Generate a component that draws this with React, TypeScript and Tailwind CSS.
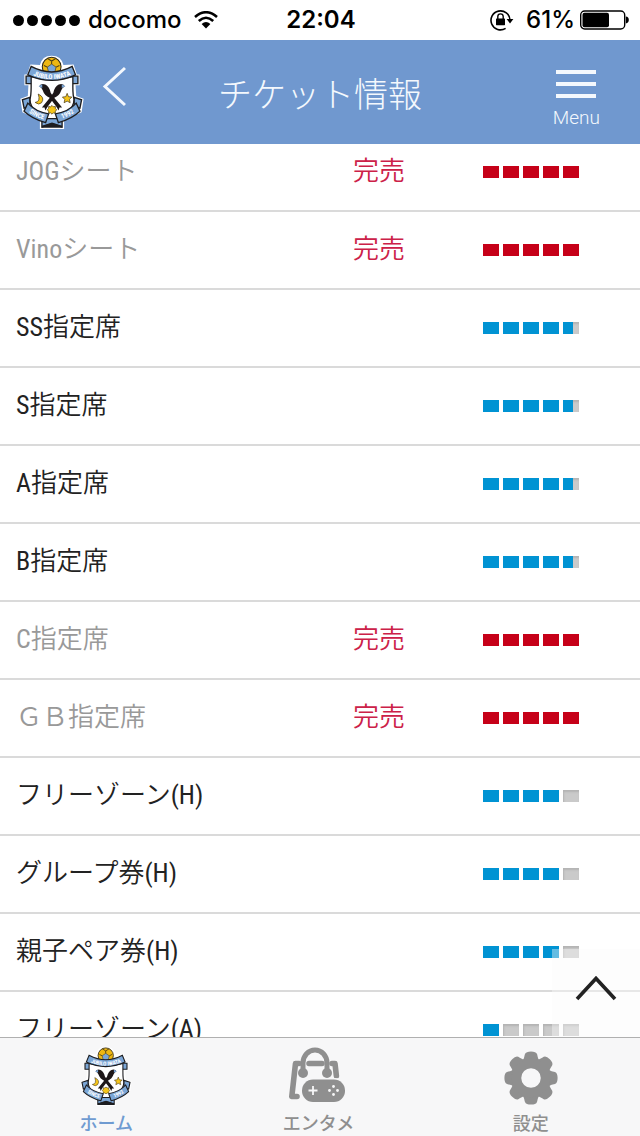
import { useId } from "react";

interface Seat {
  name: string;
  level: number;
  soldOut?: boolean;
}

const seats: Seat[] = [
  { name: "JOGシート", level: 5, soldOut: true },
  { name: "Vinoシート", level: 5, soldOut: true },
  { name: "SS指定席", level: 4.6 },
  { name: "S指定席", level: 4.6 },
  { name: "A指定席", level: 4.6 },
  { name: "B指定席", level: 4.6 },
  { name: "C指定席", level: 5, soldOut: true },
  { name: "ＧＢ指定席", level: 5, soldOut: true },
  { name: "フリーゾーン(H)", level: 4 },
  { name: "グループ券(H)", level: 4 },
  { name: "親子ペア券(H)", level: 4 },
  { name: "フリーゾーン(A)", level: 1 },
];

function Crest({ className }: { className: string }) {
  const id = useId();

  return (
    <svg viewBox="34 20 184 220" className={className} aria-hidden="true">
      {/* white outline */}
      <path
        d="M90 50Q96 22 125 22T160 50L190 48L200 78H208V110H196L198 142L220 150L214 190L162 214V240H90V214L38 190L32 150L54 142L56 110H44V78H52L62 48Z"
        fill="#fff"
      />
      {/* ball */}
      <circle cx="125" cy="55" r="28" fill="#eeb711" stroke="#2a2415" strokeWidth="3" />
      <path d="M125 47L138 56L134 72H116L112 56Z" fill="#7ba6d6" stroke="#4a3b12" strokeWidth="2" />
      <path d="M125 47V38M138 56L148 51M112 56L102 51M112 30L125 38L138 30" fill="none" stroke="#4a3b12" strokeWidth="3" />
      {/* side tabs */}
      <path d="M49 83H72V105H49ZM180 83H203V105H180Z" fill="#7ba6d6" stroke="#1d1d20" strokeWidth="4" />
      {/* shield */}
      <path
        d="M64 84Q126 100 188 84V116Q188 142 192 152Q188 196 126 214Q64 196 60 152Q64 142 64 116Z"
        fill="#fff"
        stroke="#1d1d20"
        strokeWidth="4"
      />
      {/* birds */}
      <g fill="#1d1718">
        <path d="M88 113Q94 103 106 108Q118 114 122 132L130 144L156 176L148 176L146 185L138 172L119 147Q104 142 98 124L95 119Z" />
        <path d="M164 113Q158 103 146 108Q134 114 130 132L122 144L96 176L104 176L106 185L114 172L133 147Q148 142 154 124L157 119Z" />
      </g>
      <path d="M86 113L97 107V118ZM166 113L155 107V118Z" fill="#7ba6d6" />
      {/* moon, sun, star */}
      <g fill="#f5c51a" stroke="#3a2c10" strokeWidth="2">
        <path d="M85 136Q106 146 95 162Q87 170 76 161Q93 159 85 136Z" />
        <path d="M171 134L175 144L185 145L178 152L180 162L171 157L162 162L164 152L157 145L167 144Z" />
        <path d="M126 170L130 174L136 173L136 179L140 183L136 187L136 193L130 192L126 196L122 192L116 193L116 187L112 183L116 179L116 173L122 174Z" />
      </g>
      {/* ribbons */}
      <g fill="#7ba6d6" stroke="#1d1d20" strokeWidth="4">
        <path d="M60 146L38 153L43 178L60 174ZM192 146L214 153L209 178L192 174Z" />
        <path d="M96 209H156V234L126 224L96 234Z" />
        <path d="M54 163Q76 188 116 195L107 221Q66 209 43 187Z" />
        <path d="M198 163Q176 188 136 195L145 221Q186 209 209 187Z" />
        <path d="M64 54Q125 87 186 54L196 79Q125 112 54 79Z" />
      </g>
      <path d="M96 230V236H156V230L126 221Z" fill="#1d1d20" />
      <path id={`${id}a`} d="M60 76Q125 108 192 75" fill="none" />
      <path id={`${id}b`} d="M49 183Q72 206 112 214" fill="none" />
      <path id={`${id}c`} d="M140 214Q180 205 205 181" fill="none" />
      <g fill="#fff" fontFamily="Liberation Sans Narrow, Roboto Condensed, sans-serif" fontWeight="700" fontSize="20">
        <text textAnchor="middle">
          <textPath href={`#${id}a`} startOffset="50%">JUBILO IWATA</textPath>
        </text>
        <text textAnchor="middle">
          <textPath href={`#${id}b`} startOffset="50%">SINCE</textPath>
        </text>
        <text textAnchor="middle">
          <textPath href={`#${id}c`} startOffset="50%">1992</textPath>
        </text>
      </g>
    </svg>
  );
}

function StatusBar() {
  return (
    <div className="grid h-10 shrink-0 grid-cols-[1fr_auto_1fr] items-center bg-white pl-[13px] pr-[11px] font-['Inter',sans-serif] text-2xl text-black">
      <div className="flex items-center">
        <div className="flex gap-[3px]">
          {[1, 2, 3, 4, 5].map((n) => (
            <span key={n} className="size-[11px] rounded-full bg-black" />
          ))}
        </div>
        <span className="ml-2 font-medium">docomo</span>
        <svg viewBox="0 0 24 18" className="ml-3 h-[18px] w-6" aria-hidden="true">
          <g fill="none" stroke="#000" strokeWidth="2.6">
            <path d="M1 6Q12 -3.5 23 6" />
            <path d="M4.8 10Q12 3.5 19.2 10" />
          </g>
          <path d="M7.6 13Q12 9 16.4 13L12 17.6Z" />
        </svg>
      </div>
      <span className="font-semibold">22:04</span>
      <div className="flex items-center justify-end">
        <svg viewBox="0 0 24 22" className="h-[22px] w-6" aria-hidden="true">
          <path d="M15.6 19.4A9.5 9.5 0 1 1 20 11" fill="none" stroke="#000" strokeWidth="1.6" />
          <path d="M16.6 10H23.4L20 14.4Z" />
          <rect x="6" y="9.6" width="9" height="6.6" rx="0.6" />
          <path d="M7.8 10V7.6A2.7 2.7 0 0 1 13.2 7.6V10" fill="none" stroke="#000" strokeWidth="1.4" />
        </svg>
        <span className="ml-3 mr-1 font-medium">61%</span>
        <svg viewBox="0 0 50 20" className="h-5 w-[50px]" aria-hidden="true">
          <rect x="1.7" y="1" width="44" height="18" rx="4" fill="none" stroke="#000" strokeWidth="1.4" />
          <rect x="3.5" y="2.8" width="26.5" height="14.4" rx="2" />
          <path d="M46.8 6.6Q49.8 7 49.8 10T46.8 13.4Z" />
        </svg>
      </div>
    </div>
  );
}

function Header() {
  return (
    <header className="grid h-[104px] shrink-0 grid-cols-[1fr_auto_1fr] items-center bg-[#7098cf] text-[#f4f8fd]">
      <div className="flex items-center pl-5">
        <Crest className="h-[74px] w-16" />
        <button aria-label="戻る" className="mb-3 ml-4">
          <svg viewBox="0 0 26 42" className="h-[42px] w-[26px]">
            <path d="M25 3L5 21.5L25 40" fill="none" stroke="currentColor" strokeWidth="3" />
          </svg>
        </button>
      </div>
      <h1 className="font-['Noto_Sans_CJK_JP',sans-serif] text-[34px] font-light">チケット情報</h1>
      <button className="mr-10 mt-4 flex flex-col items-center justify-self-end font-['Roboto',sans-serif] text-[19px] font-light leading-6">
        <span className="mb-2 flex w-10 flex-col gap-2">
          <span className="h-1 bg-[#f4f8fd]" />
          <span className="h-1 bg-[#f4f8fd]" />
          <span className="h-1 bg-[#f4f8fd]" />
        </span>
        Menu
      </button>
    </header>
  );
}

function Gauge({ level, soldOut }: { level: number; soldOut?: boolean }) {
  return (
    <div className="flex gap-1" role="meter" aria-label="残席" aria-valuemin={0} aria-valuemax={5} aria-valuenow={soldOut ? 0 : level}>
      {[0, 1, 2, 3, 4].map((i) => {
        const fill = Math.max(0, Math.min(1, level - i));
        return (
          <div key={i} className="h-3 w-4 bg-[#cacaca] shadow-[inset_1px_2px_2px_#b4b4b4]">
            <div
              className={`h-full ${soldOut ? "bg-[#c60018]" : "bg-[#0093d3]"}`}
              style={{ width: `${fill * 100}%` }}
            />
          </div>
        );
      })}
    </div>
  );
}

function BagIcon() {
  return (
    <svg viewBox="0 0 58 58" className="h-[58px] w-[58px]" aria-hidden="true">
      <g fill="none" stroke="#8f8f8f" strokeLinecap="round" strokeLinejoin="round">
        <path d="M14 27V17A12 13 0 0 1 38 17V27" strokeWidth="5" />
        <path d="M10 17.5H6.5L2.8 50.5H8M20 17.5H33M43 17.5H46L47.4 30" strokeWidth="5.6" />
      </g>
      <circle cx="14" cy="27" r="5" fill="#8f8f8f" />
      <circle cx="38" cy="27" r="5" fill="#8f8f8f" />
      <rect x="11" y="32" width="48" height="26" rx="13" fill="#f7f7f8" />
      <rect x="13" y="33.5" width="43" height="22.5" rx="11" fill="#8f8f8f" />
      <path d="M24 40V49M19.5 44.5H28.5" stroke="#f7f7f8" strokeWidth="1.8" />
      <g fill="#f7f7f8">
        <circle cx="44.5" cy="40.5" r="1.4" />
        <circle cx="44.5" cy="48.5" r="1.4" />
        <circle cx="40.5" cy="44.5" r="1.4" />
        <circle cx="48.5" cy="44.5" r="1.4" />
      </g>
    </svg>
  );
}

function GearIcon() {
  return (
    <svg viewBox="-27 -27 54 54" className="h-[54px] w-[54px]" aria-hidden="true">
      <g fill="#8f8f8f">
        {[0, 45, 90, 135, 180, 225, 270, 315].map((a) => (
          <path
            key={a}
            d="M-11 -16C-6.5 -18 -7 -21 -6 -24Q-5 -26.6 0 -26.6T6 -24C7 -21 6.5 -18 11 -16Z"
            transform={`rotate(${a})`}
          />
        ))}
      </g>
      <circle r="14.5" fill="none" stroke="#8f8f8f" strokeWidth="9.5" />
    </svg>
  );
}

export default function App() {
  return (
    <div className="flex h-screen flex-col overflow-hidden bg-white font-['Roboto_Condensed','Noto_Sans_CJK_JP_DemiLight','Noto_Sans_CJK_JP_Light','Noto_Sans_CJK_JP',sans-serif]">
      <StatusBar />
      <Header />

      <main className="relative min-h-0 flex-1 overflow-hidden">
        {/* list sits slightly scrolled under the header */}
        <table className="-mt-[10px] w-full table-fixed border-separate border-spacing-0 text-[26px] leading-9">
          <colgroup>
            <col />
            <col className="w-[130px]" />
            <col className="w-[157px]" />
          </colgroup>
          <tbody>
            {seats.map((seat) => (
              <tr key={seat.name} className="h-[78px]">
                <th
                  scope="row"
                  className={`border-b-2 border-[#dadada] pb-0.5 pl-4 text-left font-normal ${
                    seat.soldOut ? "text-[#999]" : "text-[#222]"
                  }`}
                >
                  {seat.name}
                </th>
                <td className="border-b-2 border-[#dadada] pb-0.5 text-[#cc2148]">
                  {seat.soldOut && "完売"}
                </td>
                <td className="border-b-2 border-[#dadada]">
                  <Gauge level={seat.level} soldOut={seat.soldOut} />
                </td>
              </tr>
            ))}
          </tbody>
        </table>

        <button
          aria-label="ページの先頭へ"
          className="absolute bottom-0 right-0 flex size-[88px] justify-center bg-[#fafafa]/40 pt-[25px] text-[#222]"
        >
          <svg viewBox="0 0 44 28" className="h-7 w-11">
            <path d="M3 25L22 4.5L41 25" fill="none" stroke="currentColor" strokeWidth="3.6" />
          </svg>
        </button>
      </main>

      <nav className="grid h-[99px] shrink-0 grid-cols-3 border-t border-[#b0b0b0] bg-[#f7f7f8] pr-[3px] font-['Noto_Sans_CJK_JP',sans-serif] text-lg font-medium leading-6 text-[#8f8f8f]">
        <a href="#home" className="flex flex-col items-center pt-2 text-[#6f9bd1]">
          <span className="flex h-16 items-start">
            <Crest className="h-[60px] w-[52px]" />
          </span>
          ホーム
        </a>
        <a href="#entertainment" className="flex flex-col items-center pt-2">
          <span className="flex h-16 items-start">
            <BagIcon />
          </span>
          エンタメ
        </a>
        <a href="#settings" className="flex flex-col items-center pt-2">
          <span className="flex h-16 items-center">
            <GearIcon />
          </span>
          設定
        </a>
      </nav>
    </div>
  );
}
